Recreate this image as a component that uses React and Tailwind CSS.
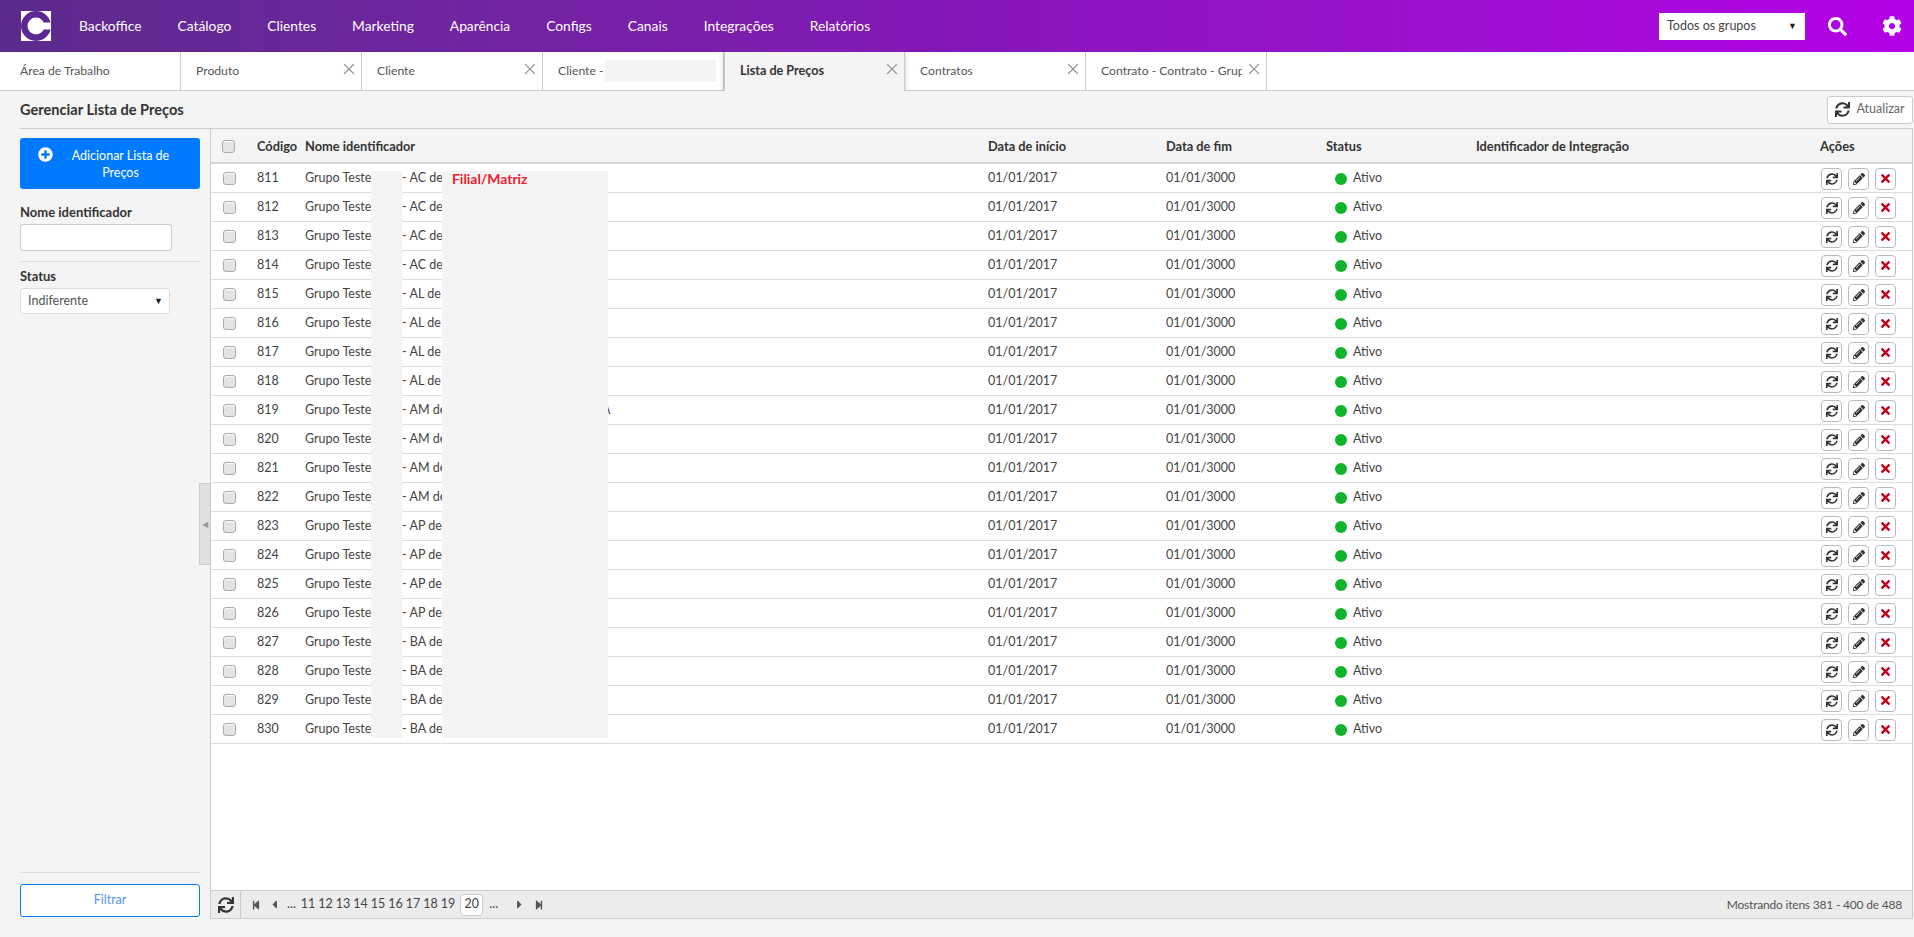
import React from "react";
import { X } from "lucide-react";
import {
    FaSync,
    FaPencilAlt,
    FaTimes,
    FaSearch,
    FaCog,
    FaPlusCircle,
    FaStepBackward,
    FaStepForward,
    FaCaretLeft,
    FaCaretRight,
} from "react-icons/fa";

const menu = ["Backoffice", "Catálogo", "Clientes", "Marketing", "Aparência", "Configs", "Canais", "Integrações", "Relatórios"];
const tabs = [
    { label: "Área de Trabalho" },
    { label: "Produto", close: true },
    { label: "Cliente", close: true },
    { label: "Cliente -", hidden: true },
    { label: "Lista de Preços", close: true, active: true },
    { label: "Contratos", close: true },
    { label: "Contrato - Contrato - Grupo", close: true },
];
const ufs = ["AC", "AC", "AC", "AC", "AL", "AL", "AL", "AL", "AM", "AM", "AM", "AM", "AP", "AP", "AP", "AP", "BA", "BA", "BA", "BA"];
const cols = "grid grid-cols-[46px_48px_683px_178px_160px_150px_344px_1fr] items-center";

const Logo = () => (
    <svg width="30" height="30" viewBox="0 0 30 30">
        <rect width="30" height="30" fill="#fff" />
        <circle cx="15" cy="15" r="15" fill="#5c2790" />
        <circle cx="15" cy="15" r="8.5" fill="#fff" />
        <rect x="15" y="11.5" width="15" height="7" fill="#fff" />
    </svg>
);

const Check = () => <span className="block w-[13px] h-[13px] rounded-[3px] bg-[#e4e4e4] border border-[#aaa] shadow-[inset_0_1px_1px_#fff]" />;

const Row = ({ code, uf }) => (
    <div className={`${cols} h-[29px] pt-[1px] border-b border-[#dcdcdc] text-[12.5px] text-[#444]`}>
        <div className="pl-[12px]"><Check /></div>
        <div>{code}</div>
        <div className="flex">
            <span className="w-[97px]">Grupo Teste</span>
            <span className="w-[200px]">- {uf} de</span>
            {code === 819 && <span>A</span>}
        </div>
        <div>01/01/2017</div>
        <div>01/01/3000</div>
        <div className="flex items-center gap-[6px] pl-[9px]">
            <span className="w-3 h-3 rounded-full bg-[#10b42c]" />
            Ativo
        </div>
        <div />
        <div className="flex gap-[6px] pl-[1px]">
            <button className="w-[21px] h-[22px] flex items-center justify-center bg-white border border-[#bbb] rounded-[4px] text-[#333] text-[12px]"><FaSync /></button>
            <button className="w-[21px] h-[22px] flex items-center justify-center bg-white border border-[#bbb] rounded-[4px] text-[#333] text-[12px]"><FaPencilAlt /></button>
            <button className="w-[21px] h-[22px] flex items-center justify-center bg-white border border-[#bbb] rounded-[4px] text-[#c00018] text-[13px]"><FaTimes /></button>
        </div>
    </div>
);

export default function App() {
    return (
        <div className="h-[937px] overflow-hidden flex flex-col bg-[#f4f4f4] font-['Lato',sans-serif] text-[#333]">
            <header className="h-[52px] shrink-0 flex items-center bg-gradient-to-r from-[#5c2a8c] via-[#8516b8] to-[#b400e6] pl-[21px] pr-[12px]">
                <Logo />
                <nav className="flex gap-[36px] ml-[28px] text-[13.8px] text-white">
                    {menu.map((m) => <span key={m}>{m}</span>)}
                </nav>
                <div className="ml-auto w-[146px] h-[27px] bg-white flex items-center justify-between px-2 text-[12.5px] text-[#444]">
                    Todos os grupos
                    <span className="text-[9px] text-[#222]">▼</span>
                </div>
                <FaSearch className="ml-[23px] text-white text-[19px]" />
                <FaCog className="ml-[35px] text-white text-[20px]" />
            </header>

            <div className="h-[39px] shrink-0 flex bg-white border-b border-[#ccc] text-[12.2px] text-[#555]">
                {tabs.map((t) => (
                    <div
                        key={t.label}
                        className={`relative w-[181px] flex items-center border-r border-[#ccc] whitespace-nowrap overflow-hidden ${t.label === "Área de Trabalho" ? "pl-[20px]" : "pl-[15px]"} ${t.active ? "h-[39px] pl-[14px] bg-[#f4f4f4] font-bold text-[12.6px] text-[#333] border-l shadow-[0_0_6px_rgba(0,0,0,0.2)] [clip-path:inset(0_-8px_0_-8px)] z-10" : "h-[38px]"}`}
                    >
                        {t.label}
                        {t.hidden && <span className="absolute left-[62px] top-[8px] w-[111px] h-[22px] bg-[#f4f4f4]" />}
                        {t.close && (
                            <span className={`absolute right-0 top-0 h-full w-[24px] flex items-start justify-center pt-[8px] ${t.active ? "" : "bg-white"}`}>
                                <X size={18} strokeWidth={1.6} className="text-[#999]" />
                            </span>
                        )}
                    </div>
                ))}
            </div>

            <div className="h-[38px] shrink-0 ml-[20px] mr-[1px] flex items-center justify-between border-b border-[#ccc]">
                <h1 className="text-[14.6px] font-bold text-[#333]">Gerenciar Lista de Preços</h1>
                <button className="w-[86px] h-[28px] flex items-center justify-center gap-[6px] bg-white border border-[#ccc] rounded-[3px] text-[12.5px] text-[#666]">
                    <FaSync className="text-[#333] text-[15px]" />
                    Atualizar
                </button>
            </div>

            <div className="flex-1 flex min-h-0 pb-[18px]">
                <aside className="relative w-[210px] shrink-0 flex flex-col pl-[20px] pr-[10px] pt-[9px] pb-[2px]">
                    <button className="h-[51px] flex bg-[#007bff] rounded-[3px] text-white text-[12.5px]">
                        <FaPlusCircle className="ml-[18px] mt-[9px] text-[15px] shrink-0" />
                        <span className="flex-1 pl-[14px] pr-[26px] pt-[9px] leading-[17px] text-center">Adicionar Lista de Preços</span>
                    </button>
                    <label className="mt-[15px] text-[13px] font-bold text-[#333] leading-[16px]">Nome identificador</label>
                    <div className="mt-[4px] w-[152px] h-[27px] bg-white border border-[#ccc] rounded-[3px]" />
                    <div className="mt-[10px] border-t border-[#dcdcdc]" />
                    <label className="mt-[6px] text-[13px] font-bold text-[#333] leading-[16px]">Status</label>
                    <div className="mt-[4px] w-[150px] h-[26px] bg-white border border-[#dcdcdc] rounded-[3px] flex items-center justify-between pl-[7px] pr-[6px] text-[12.5px] text-[#555]">
                        Indiferente
                        <span className="text-[9px] text-[#222]">▼</span>
                    </div>
                    <div className="mt-auto border-t border-[#dcdcdc]" />
                    <button className="mt-[11px] h-[33px] bg-white border border-[#007bff] rounded-[3px] text-[12.5px] text-[#5b93f5]">Filtrar</button>
                    <div className="absolute right-0 top-[354px] w-[11px] h-[82px] bg-[#e0e0e0] border border-[#ccc] border-r-0 flex items-center justify-center text-[8px] text-[#999]">◀</div>
                </aside>

                <main className="w-[1703px] flex flex-col border-x border-b border-[#ccc] bg-white">
                    <div className={`${cols} h-[35px] pt-[2px] shrink-0 bg-[#f4f4f4] border-b-2 border-[#d4d4d4] text-[12.8px] font-bold text-[#333]`}>
                        <div className="pl-[11px]"><Check /></div>
                        <div>Código</div>
                        <div>Nome identificador</div>
                        <div>Data de início</div>
                        <div>Data de fim</div>
                        <div>Status</div>
                        <div>Identificador de Integração</div>
                        <div>Ações</div>
                    </div>
                    <div className="relative flex-1">
                        {ufs.map((uf, i) => <Row key={i} code={811 + i} uf={uf} />)}
                        {/* blocos cinza por cima dos nomes */}
                        <div className="absolute left-[160px] top-[7px] w-[31px] h-[567px] bg-[#f4f4f4]" />
                        <div className="absolute left-[231px] top-[7px] w-[166px] h-[567px] bg-[#f4f4f4] pl-[10px] text-[13.9px] font-bold leading-[15px] text-[#ee1c2e]">Filial/Matriz</div>
                    </div>
                    <div className="h-[28px] shrink-0 flex items-center bg-[#ececec] border-t border-[#ccc] text-[12.5px] text-[#444]">
                        <div className="w-[30px] h-full flex items-center justify-center border-r border-[#ccc] text-[16px] text-[#333]"><FaSync /></div>
                        <div className="flex items-center ml-[10px] text-[#555] text-[10px] gap-[7px]">
                            <FaStepBackward />
                            <FaCaretLeft className="text-[13px]" />
                        </div>
                        <div className="flex items-center ml-[6px] gap-[3px]">
                            <span className="mr-[2px]">...</span>
                            {[11, 12, 13, 14, 15, 16, 17, 18, 19].map((n) => <span key={n}>{n}</span>)}
                            <span className="w-[23px] h-[22px] ml-[2px] flex items-center justify-center bg-white border border-[#ccc] rounded-[4px]">20</span>
                            <span className="ml-[3px]">...</span>
                        </div>
                        <div className="flex items-center ml-[15px] text-[#555] text-[10px] gap-[8px]">
                            <FaCaretRight className="text-[13px]" />
                            <FaStepForward />
                        </div>
                        <div className="ml-auto pr-[10px] text-[12px] tracking-[-0.2px] text-[#555]">Mostrando itens 381 - 400 de 488</div>
                    </div>
                </main>
            </div>
        </div>
    );
}
